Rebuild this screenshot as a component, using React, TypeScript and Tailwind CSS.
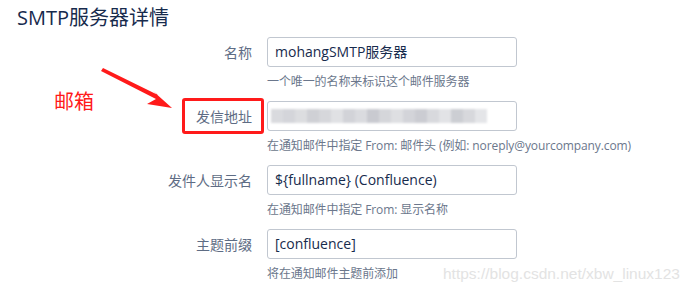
import type { ReactNode } from "react";

const FONT = { fontFamily: '"Open Sans", "Noto Sans CJK SC", sans-serif' };

// 马赛克打码的灰度块
const MOSAIC = [
  "#d9dade", "#d4d5da", "#dcdde0", "#cfd0d5", "#d6d7db", "#e0e1e4", "#d2d3d8",
  "#dadbdf", "#c9cad0", "#d5d6da", "#dedfe2", "#d3d4d9", "#cbccd2", "#d8d9dd",
  "#e2e3e6", "#ccced3", "#d7d8dc", "#e4e5e8",
];

function Field({ label, desc, children }: { label: string; desc: string; children: ReactNode }) {
  return (
    <div className="flex flex-col">
      <div className="flex items-center">
        <label className="w-[252px] text-right text-[14px] text-[#5e6c84]">{label}</label>
        <div className="ml-[15px] h-[30px] w-[250px] rounded-[3px] border border-[#c1c7d0] bg-white">
          {children}
        </div>
      </div>
      <div className="ml-[267px] mt-[6px] h-[18px] whitespace-nowrap text-[12px] leading-[18px] tracking-[-0.1px] text-[#6b778c]">
        {desc}
      </div>
    </div>
  );
}

function Value({ text }: { text: string }) {
  return <div className="px-[7px] text-[14px] leading-[28px] text-[#172b4d]">{text}</div>;
}

export default function App() {
  return (
    <div className="relative h-[291px] w-[695px] overflow-hidden bg-white" style={FONT}>
      <h1 className="pl-[17px] pt-[4px] text-[20px] leading-[28px] text-[#172b4d]">SMTP服务器详情</h1>

      <div className="mt-[5px] flex flex-col gap-[10px]">
        <Field label="名称" desc="一个唯一的名称来标识这个邮件服务器">
          <Value text="mohangSMTP服务器" />
        </Field>
        <Field label="发信地址" desc="在通知邮件中指定 From: 邮件头 (例如: noreply@yourcompany.com)">
          <div className="flex h-full items-center pl-[3px]">
            <div className="flex h-[14px] blur-[1px]">
              {MOSAIC.map((c, i) => (
                <div key={i} className="h-full w-[12px]" style={{ backgroundColor: c }} />
              ))}
            </div>
          </div>
        </Field>
        <Field label="发件人显示名" desc="在通知邮件中指定 From: 显示名称">
          <Value text="${fullname} (Confluence)" />
        </Field>
        <Field label="主题前缀" desc="将在通知邮件主题前添加">
          <Value text="[confluence]" />
        </Field>
      </div>

      {/* 标注：红框、箭头、文字 */}
      <div className="absolute left-[182px] top-[98px] h-[36px] w-[82px] rounded-[3px] border-[3px] border-[#ff1a1a]" />
      <div className="absolute left-[54px] top-[88px] text-[20px] leading-[28px] text-[#ff1a1a]">邮箱</div>
      <svg className="absolute left-0 top-0" width="695" height="291">
        <polygon points="103,68 158,95 153,91 172,108 147,104 156,99 101,71" fill="#ff1a1a" />
      </svg>

      <div
        className="absolute left-[443px] top-[263px] whitespace-nowrap text-[15.5px] leading-[22px] text-[#e3e3e3]"
        style={{ fontFamily: '"Liberation Sans", Arial, sans-serif' }}
      >
        https://blog.csdn.net/xbw_linux123
      </div>
    </div>
  );
}
